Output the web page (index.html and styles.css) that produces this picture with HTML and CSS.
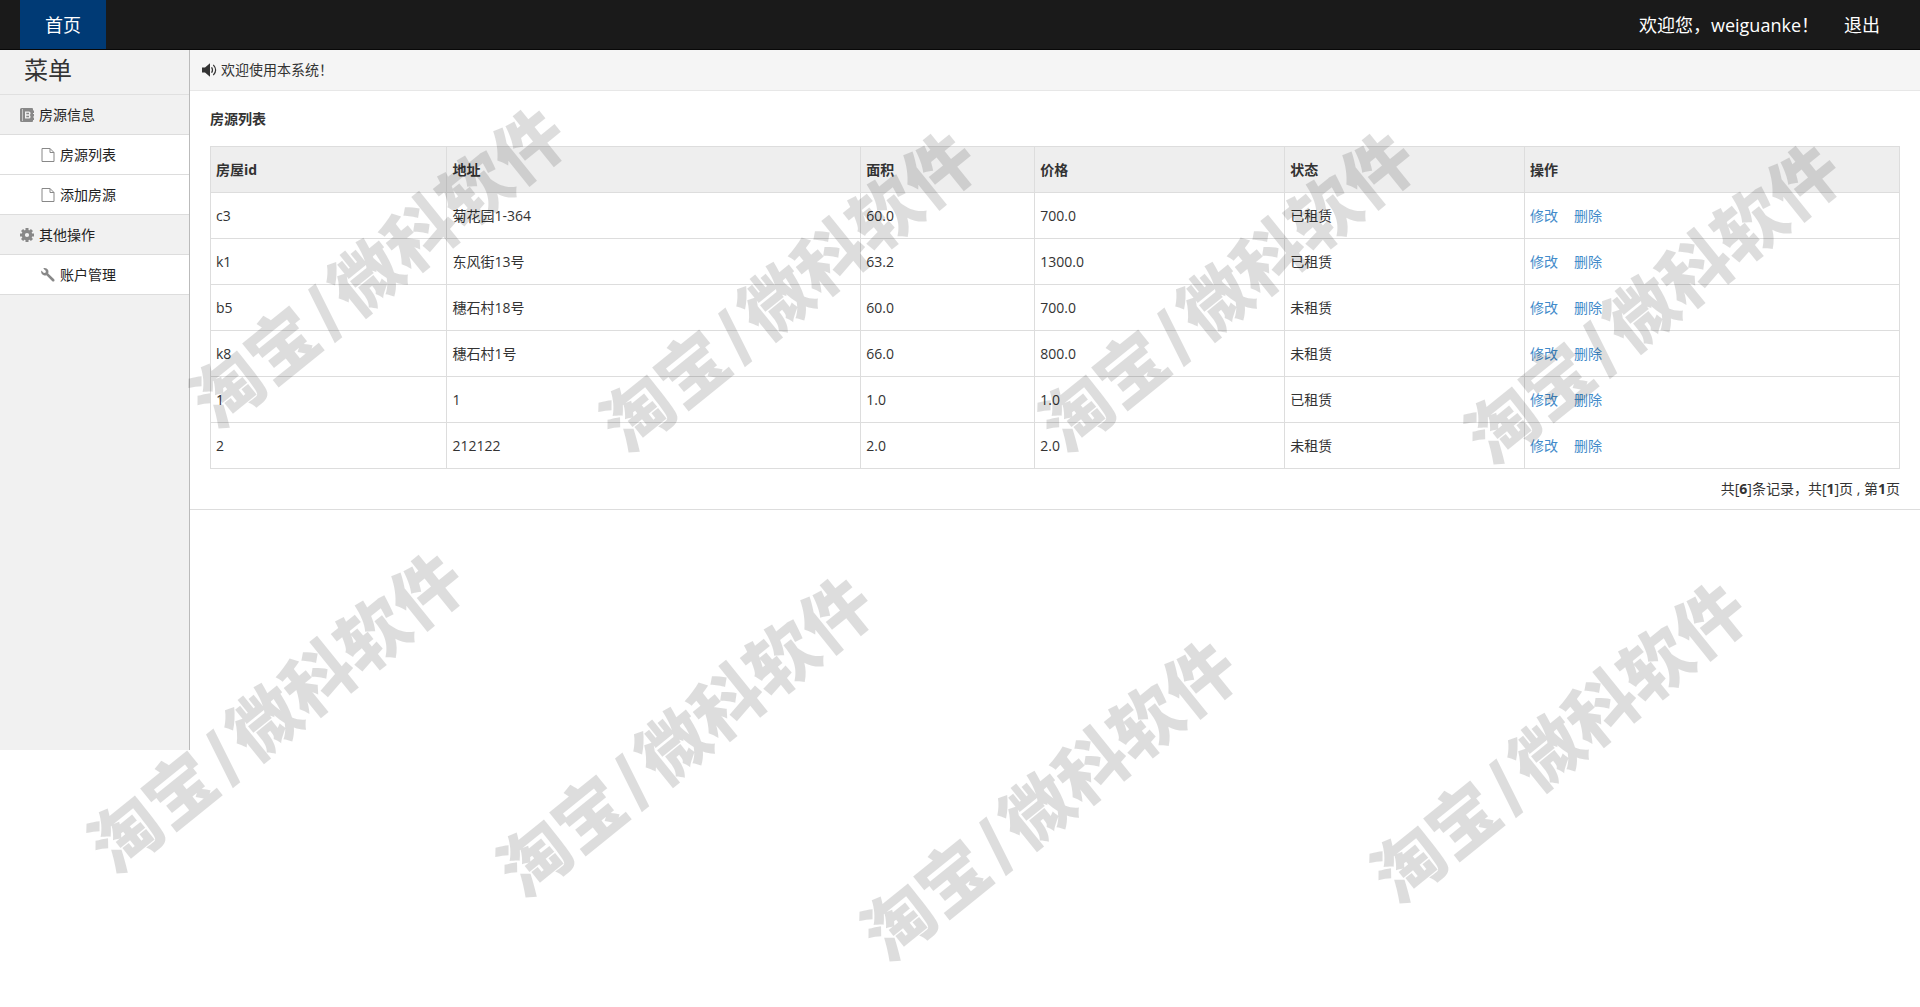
FILE: index.html
```html
<!DOCTYPE html>
<html lang="zh-CN">
<head>
<meta charset="utf-8">
<title>房源列表</title>
<link rel="stylesheet" href="styles.css">
</head>
<body>
<header class="topbar">
  <nav class="topnav"><a class="tab" href="#">首页</a></nav>
  <div class="user">
    <span>欢迎您，weiguanke！</span>
    <a class="logout" href="#">退出</a>
  </div>
</header>
<div class="layout">
  <aside class="sidebar">
    <h1 class="menu-title">菜单</h1>
    <ul class="menu">
      <li class="group">
        <svg class="icon" viewBox="0 0 14 14" aria-hidden="true"><path fill="currentColor" fill-rule="evenodd" d="M1.500 0H12Q13 0 13 1V2.500H14V5H13V6H14V8.500H13V9.500H14V12H13V13Q13 14 12 14H1.500Q0 14 0 12.500V1.500Q0 0 1.500 0ZM2 1V13H2.600V1ZM5 3.500V10.500H9Q10.500 10.500 10.500 9V8L9.700 7L10.500 6V5Q10.500 3.500 9 3.500ZM6.300 4.800H9V6.300H6.300ZM6.300 7.700H9V9.200H6.300Z"/></svg>
        <span>房源信息</span>
      </li>
      <li><a class="item" href="#">
        <svg class="icon" viewBox="0 0 14 14" aria-hidden="true"><path fill="none" stroke="currentColor" d="M1 .5H9L13 4.500V13.500H1ZM9 .5V4.500H13"/></svg>
        <span>房源列表</span></a></li>
      <li><a class="item" href="#">
        <svg class="icon" viewBox="0 0 14 14" aria-hidden="true"><path fill="none" stroke="currentColor" d="M1 .5H9L13 4.500V13.500H1ZM9 .5V4.500H13"/></svg>
        <span>添加房源</span></a></li>
      <li class="group">
        <svg class="icon" viewBox="0 0 14 14" aria-hidden="true"><circle cx="7" cy="7" r="3.700" fill="none" stroke="currentColor" stroke-width="3.200"/><path stroke="currentColor" stroke-width="3" d="M7 0V3M7 11V14M0 7H3M11 7H14M2.050 2.050L4.200 4.200M9.800 9.800L11.950 11.950M11.950 2.050L9.800 4.200M4.200 9.800L2.050 11.950"/></svg>
        <span>其他操作</span>
      </li>
      <li><a class="item" href="#">
        <svg class="icon" viewBox="0 0 14 14" aria-hidden="true"><path fill="currentColor" d="M2.300 .4L4.900 3L4.500 4.700L2.900 5L.3 2.500C-.3 4.500.8 6.700 2.800 7.300C3.700 7.600 4.600 7.500 5.400 7.200L11.300 13.200Q12.200 14 13.200 13.200Q14 12.200 13.200 11.300L7.200 5.400C7.900 3.600 7.400 1.500 5.600.6C4.600 0 3.400-.1 2.300.4Z"/></svg>
        <span>账户管理</span></a></li>
    </ul>
  </aside>
  <main class="main">
    <div class="notice">
      <svg class="icon" viewBox="0 0 15 14" aria-hidden="true"><path fill="currentColor" d="M0 4.500H3L8 .2V13.800L3 9.500H0Z"/><path fill="none" stroke="currentColor" stroke-width="1.200" d="M9.600 4.200Q11.400 7 9.600 9.800M11.300 1.800Q16 7 11.300 12.200"/></svg>
      <span>欢迎使用本系统！</span>
    </div>
    <section class="content">
      <h2 class="heading">房源列表</h2>
      <table class="houses">
        <colgroup><col class="c-id"><col class="c-addr"><col class="c-area"><col class="c-price"><col class="c-state"><col></colgroup>
        <thead>
          <tr><th>房屋id</th><th>地址</th><th>面积</th><th>价格</th><th>状态</th><th>操作</th></tr>
        </thead>
        <tbody>
          <tr><td>c3</td><td>菊花园1-364</td><td>60.0</td><td>700.0</td><td>已租赁</td><td><div class="ops"><a href="#">修改</a><a href="#">删除</a></div></td></tr>
          <tr><td>k1</td><td>东风街13号</td><td>63.2</td><td>1300.0</td><td>已租赁</td><td><div class="ops"><a href="#">修改</a><a href="#">删除</a></div></td></tr>
          <tr><td>b5</td><td>穗石村18号</td><td>60.0</td><td>700.0</td><td>未租赁</td><td><div class="ops"><a href="#">修改</a><a href="#">删除</a></div></td></tr>
          <tr><td>k8</td><td>穗石村1号</td><td>66.0</td><td>800.0</td><td>未租赁</td><td><div class="ops"><a href="#">修改</a><a href="#">删除</a></div></td></tr>
          <tr><td>1</td><td>1</td><td>1.0</td><td>1.0</td><td>已租赁</td><td><div class="ops"><a href="#">修改</a><a href="#">删除</a></div></td></tr>
          <tr><td>2</td><td>212122</td><td>2.0</td><td>2.0</td><td>未租赁</td><td><div class="ops"><a href="#">修改</a><a href="#">删除</a></div></td></tr>
        </tbody>
      </table>
      <p class="summary">共[<b>6</b>]条记录，共[<b>1</b>]页 , 第<b>1</b>页</p>
    </section>
  </main>
</div>
<div class="watermarks" aria-hidden="true">
  <div class="mark m1"><span>淘宝</span><span class="slash">/</span><span>微科软件</span></div>
  <div class="mark m2"><span>淘宝</span><span class="slash">/</span><span>微科软件</span></div>
  <div class="mark m3"><span>淘宝</span><span class="slash">/</span><span>微科软件</span></div>
  <div class="mark m4"><span>淘宝</span><span class="slash">/</span><span>微科软件</span></div>
  <div class="mark m5"><span>淘宝</span><span class="slash">/</span><span>微科软件</span></div>
  <div class="mark m6"><span>淘宝</span><span class="slash">/</span><span>微科软件</span></div>
  <div class="mark m7"><span>淘宝</span><span class="slash">/</span><span>微科软件</span></div>
  <div class="mark m8"><span>淘宝</span><span class="slash">/</span><span>微科软件</span></div>
</div>
</body>
</html>
```
FILE: styles.css
```css
* { box-sizing: border-box; }

body {
  margin: 0;
  position: relative;
  min-height: 100vh;
  background: #fff;
  color: #333;
  font: 14px/20px "Open Sans", "Noto Sans CJK SC", sans-serif;
}

a { color: #428bca; text-decoration: none; }

.topbar {
  display: flex;
  justify-content: space-between;
  height: 50px;
  padding: 0 40px 0 20px;
  background: #1a1a1a;
  border-bottom: 1px solid #080808;
  color: #fff;
  font-size: 18px;
  line-height: 50px;
}
.topnav { display: flex; }
.tab { padding: 0 25px; background: #003a75; color: #fff; }
.user { display: flex; gap: 25px; }
.logout { color: #fff; }

.layout { display: flex; align-items: flex-start; }

.sidebar {
  flex: 0 0 190px;
  min-height: 700px;
  background: #f1f1f1;
  border-right: 1px solid #bbb;
}
.menu-title {
  margin: 0;
  padding: 4px 24px 8px;
  font-size: 24px;
  font-weight: 400;
  line-height: 32px;
}
.menu { margin: 0; padding: 0; list-style: none; border-top: 1px solid #e0e0e0; }
.group, .item {
  display: flex;
  align-items: center;
  gap: 5px;
  height: 40px;
  padding: 0 20px;
  border-bottom: 1px solid #ddd;
  color: #222;
}
.item { padding-left: 41px; background: #fff; }
.icon { width: 14px; height: 14px; flex: none; color: #888; overflow: visible; }

.main { flex: 1; min-width: 0; }
.notice {
  display: flex;
  align-items: center;
  gap: 4px;
  height: 41px;
  padding-left: 12px;
  background: #f5f5f5;
  border-bottom: 1px solid #e7e7e7;
}
.notice .icon { width: 15px; color: #333; }

.content { padding: 18px 20px 10px; border-bottom: 1px solid #ddd; }
.heading { margin: 0 0 17px; font-size: 14px; line-height: 20px; }

.houses { width: 100%; table-layout: fixed; border-collapse: collapse; }
.houses th, .houses td {
  height: 46px;
  padding: 0 5px;
  border: 1px solid #ddd;
  text-align: left;
}
.houses th { background: #eee; }
.c-id { width: 14%; }
.c-addr { width: 24.5%; }
.c-area { width: 10.3%; }
.c-price { width: 14.8%; }
.c-state { width: 14.2%; }
.ops { display: flex; gap: 16px; }
.summary { margin: 10px 0 0; text-align: right; }

/* repeated diagonal watermark laid over the whole page */
.watermarks { position: absolute; inset: 0; overflow: hidden; pointer-events: none; }
.mark {
  display: flex;
  align-items: center;
  position: absolute;
  transform: translate(-50%, -50%) rotate(-39deg);
  color: #000;
  opacity: .13;
  font: 900 70px/72px "Noto Sans CJK SC", sans-serif;
  white-space: nowrap;
}
.slash { margin: 0 8px; font-size: 56px; -webkit-text-stroke: 3px #000; }
.m1 { left: 376px; top: 264px; }
.m2 { left: 786px; top: 288px; }
.m3 { left: 1225px; top: 288px; }
.m4 { left: 1651px; top: 300px; }
.m5 { left: 274px; top: 709px; }
.m6 { left: 683px; top: 733px; }
.m7 { left: 1047px; top: 797px; }
.m8 { left: 1557px; top: 739px; }
```
